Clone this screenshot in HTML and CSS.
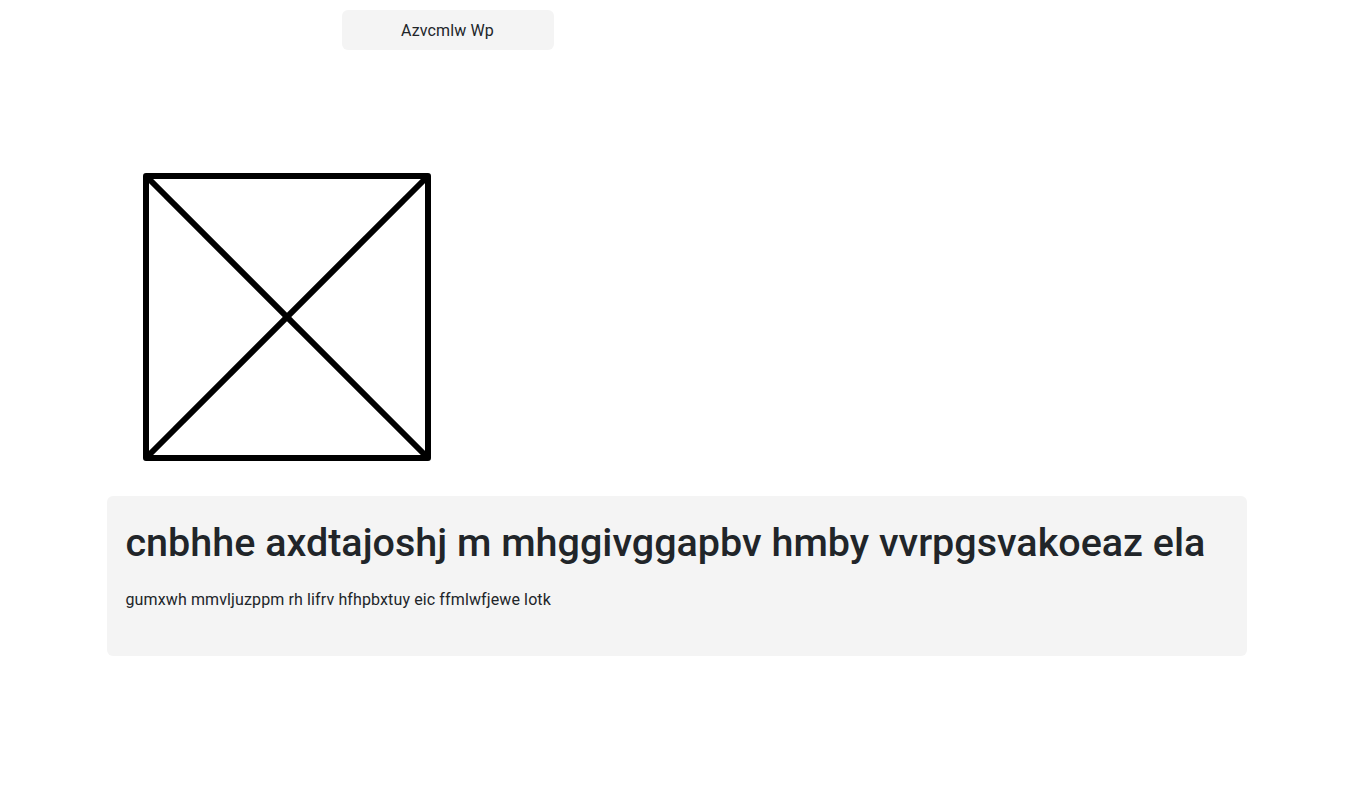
FILE: index.html
```html
<!DOCTYPE html>
<html lang="en">
<head>
<meta charset="utf-8">
<title>Page</title>
<link rel="stylesheet" href="styles.css">
</head>
<body>
<div class="container">
  <header class="topbar">
    <button class="btn" type="button">Azvcmlw Wp</button>
  </header>
  <div class="figure">
    <svg class="placeholder" width="288" height="288" viewBox="0 0 288 288" aria-hidden="true">
      <rect x="3" y="3" width="282" height="282" fill="none" stroke="#000" stroke-width="6" stroke-linejoin="round"/>
      <line x1="4" y1="4" x2="284" y2="284" stroke="#000" stroke-width="6"/>
      <line x1="284" y1="4" x2="4" y2="284" stroke="#000" stroke-width="6"/>
    </svg>
  </div>
  <section class="card">
    <h1 class="card-title">cnbhhe axdtajoshj m mhggivggapbv hmby vvrpgsvakoeaz ela</h1>
    <p class="card-text">gumxwh mmvljuzppm rh lifrv hfhpbxtuy eic ffmlwfjewe lotk</p>
  </section>
</div>
</body>
</html>
```

FILE: styles.css
```css
* { box-sizing: border-box; }
html, body { margin: 0; padding: 0; background: #fff; }
body {
  font-family: Roboto, "Liberation Sans", Arial, sans-serif;
  color: #212529;
  font-size: 16px;
  line-height: 1.5;
}
.container {
  width: 1140px;
  margin: 0 auto;
  padding-top: 10px;
}
.topbar {
  display: flex;
  padding-left: 235px;
}
.btn {
  width: 212px;
  height: 40px;
  border: none;
  border-radius: 6px;
  background: #f4f4f4;
  color: #212529;
  font-family: inherit;
  font-size: 16px;
  letter-spacing: 0.12px;
  padding: 0;
}
.figure {
  padding-left: 36px;
  margin-top: 123px;
}
.placeholder { display: block; }
.card {
  margin-top: 35px;
  background: #f4f4f4;
  border-radius: 6px;
  padding: 23px 19px 30px;
  height: 160px;
}
.card-title {
  margin: 0 0 22px;
  font-size: 39.5px;
  font-weight: 500;
  line-height: 1.2;
}
.card-text {
  margin: 0;
  letter-spacing: 0.12px;
}
```
